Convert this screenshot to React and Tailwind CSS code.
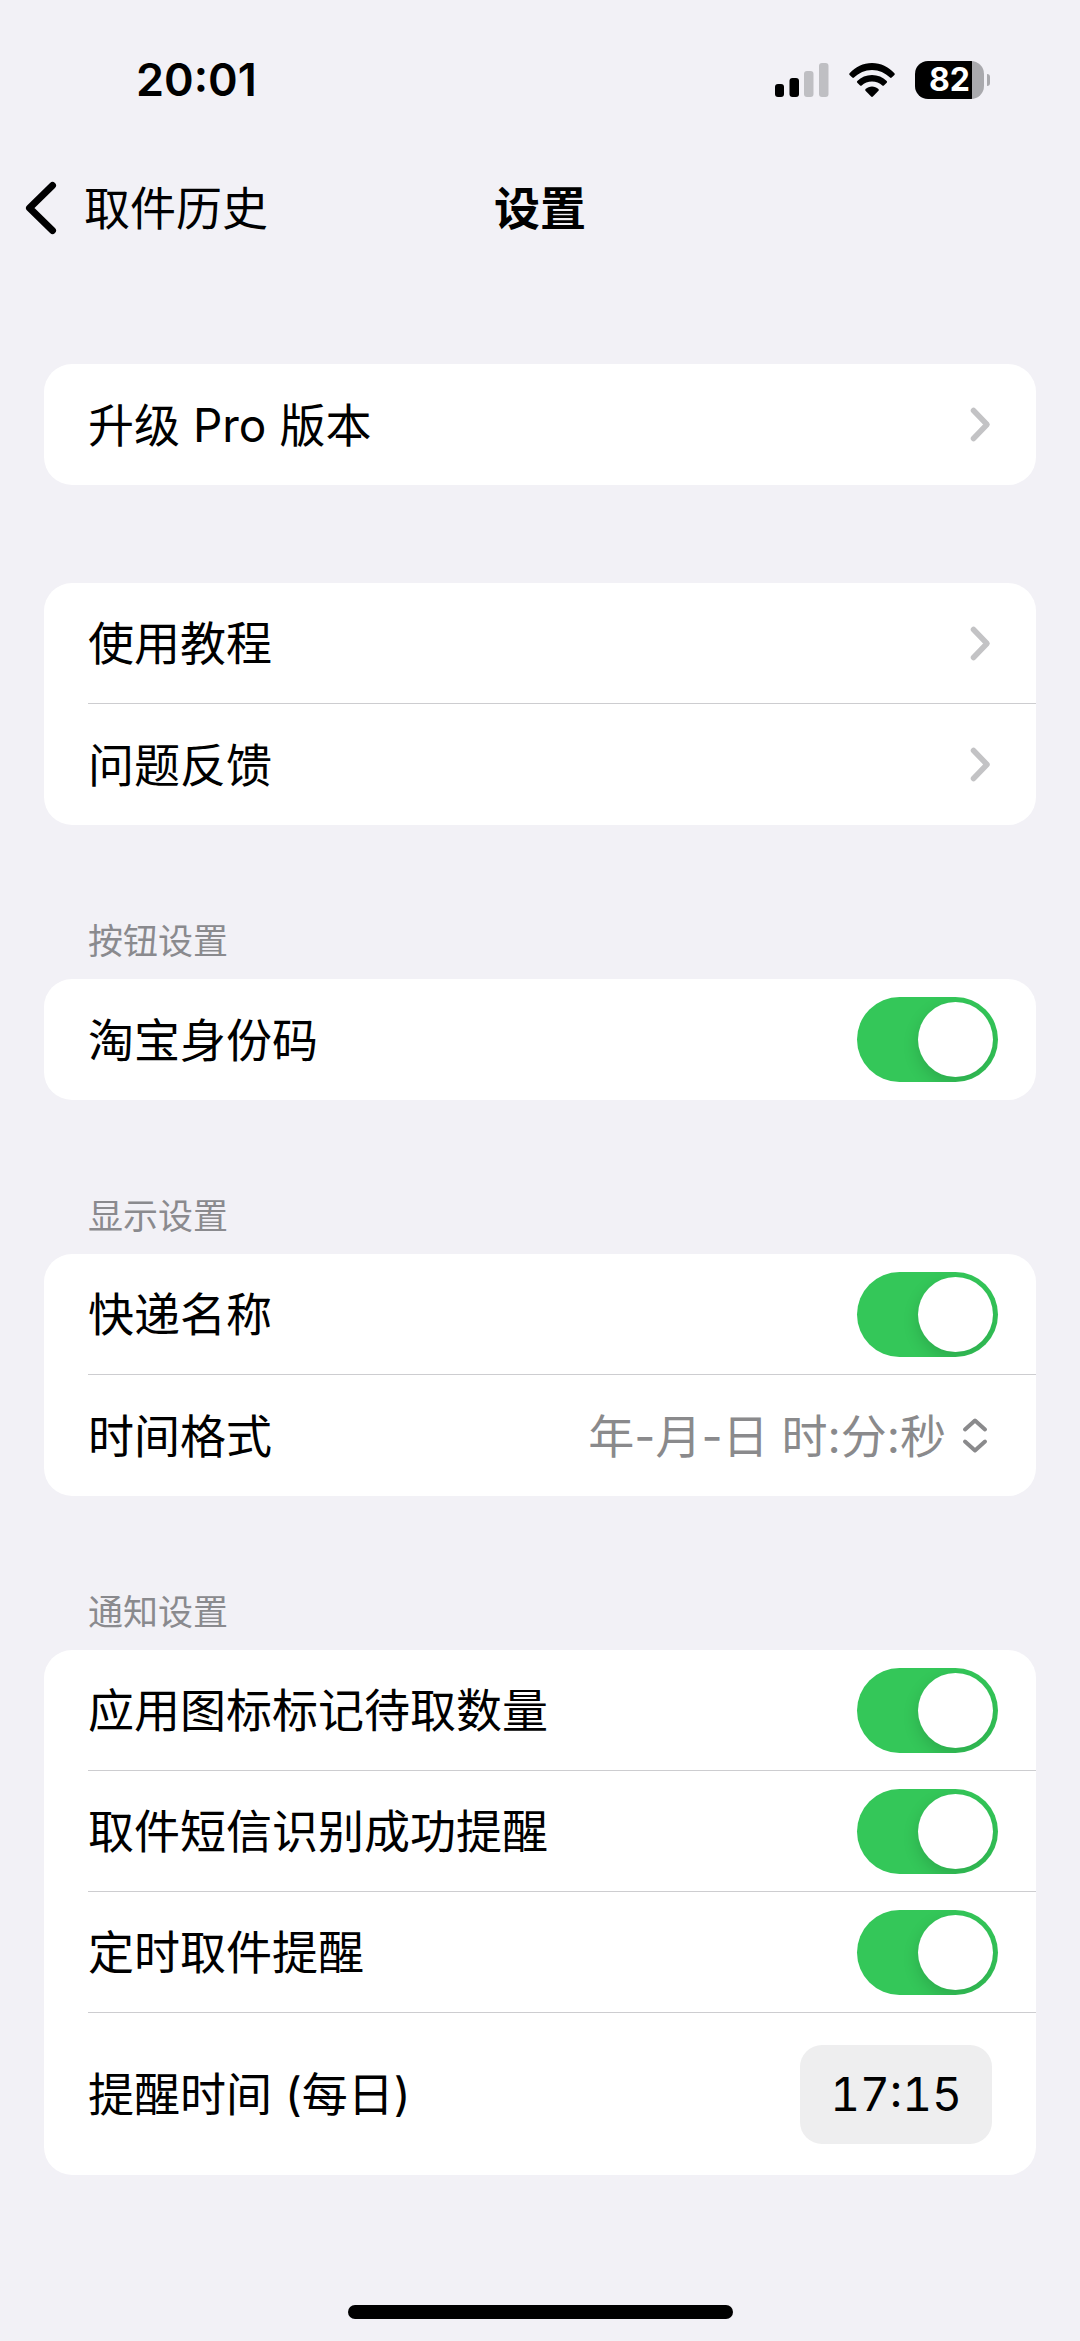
import React, { useState } from 'react'

const TIME_FORMATS = ['年-月-日 时:分:秒', '年-月-日 时:分', '月-日 时:分']

function StatusBar() {
  return (
    <div className="flex h-40 items-center justify-between pl-[136px] pr-[90px]">
      <time className="text-[45px] leading-[56px] font-semibold">20:01</time>
      <div className="flex items-center">
        <svg
          width="54"
          height="34"
          viewBox="0 0 54 34"
          className="mr-5"
          aria-hidden="true"
        >
          <rect x="0" y="21" width="9" height="13" rx="3" fill="#000" />
          <rect x="14.5" y="15" width="9.5" height="19" rx="3" fill="#000" />
          <rect x="29" y="8" width="9.5" height="26" rx="3" fill="#bfbfc3" />
          <rect x="44" y="0" width="9.5" height="34" rx="3" fill="#bfbfc3" />
        </svg>
        <svg
          width="46"
          height="34"
          viewBox="0 0 46 34"
          className="mr-5"
          aria-hidden="true"
        >
          <path d="M0.6 10.2C6.4 4 14.2 0 23 0s16.6 4 22.4 10.2c.5.5.5 1.2 0 1.7l-2.7 2.7c-.5.5-1.2.5-1.7 0C36.2 9.8 30 6.9 23 6.9S9.8 9.8 5 14.6c-.5.5-1.2.5-1.7 0L.6 11.9c-.5-.5-.5-1.2 0-1.7z" />
          <path d="M8.3 18C12.1 14.1 17.3 12 23 12s10.900 2.100 14.700 6c.5.5.5 1.2 0 1.7l-2.8 2.8c-.4.4-1.1.4-1.6 0C30.6 19.9 27 18.5 23 18.5s-7.6 1.4-10.3 4c-.5.4-1.2.4-1.6 0l-2.8-2.8c-.5-.5-.5-1.2 0-1.7z" />
          <path d="M16.6 26C18.3 24.5 20.6 23.5 23 23.5s4.7 1 6.4 2.5c.5.5.5 1.2.1 1.7l-5.600 5.800c-.5.5-1.3.5-1.8 0l-5.600-5.800c-.4-.5-.4-1.2.1-1.7z" />
        </svg>
        <div className="flex items-center gap-[3px]">
          <div className="flex h-[38px] w-[69px] items-center justify-center rounded-[13px] bg-linear-to-r from-black from-[57px] to-[#a9a9ad] to-[57px] text-[32px] leading-[38px] font-bold text-white">
            82
          </div>
          <div className="h-[12px] w-[3px] rounded-r-full bg-[#a9a9ad]" />
        </div>
      </div>
    </div>
  )
}

function NavBar() {
  return (
    <header className="grid h-24 grid-cols-[1fr_auto_1fr] items-center">
      <a href="#history" className="flex items-center gap-[26px] pl-6">
        <svg
          width="34"
          height="56"
          viewBox="0 0 34 56"
          fill="none"
          stroke="#000"
          strokeWidth="7"
          strokeLinecap="round"
          strokeLinejoin="round"
          aria-hidden="true"
        >
          <path d="M28.5 5.5L5.5 28l23 22.5" />
        </svg>
        <span className="text-[46px] leading-[56px]">取件历史</span>
      </a>
      <h1 className="text-[46px] leading-[56px] font-semibold">设置</h1>
    </header>
  )
}

function Section({ title, children }) {
  return (
    <section>
      {title && (
        <h2 className="mb-[13px] pl-11 text-[35px] leading-[50px] text-[#8a8a8e]">
          {title}
        </h2>
      )}
      <div className="overflow-hidden rounded-[28px] bg-white pl-11">
        <div className="divide-y divide-[#cdcdd0]">{children}</div>
      </div>
    </section>
  )
}

function LinkRow({ label, href }) {
  return (
    <a href={href} className="flex h-[121px] items-center justify-between pr-11">
      <span>{label}</span>
      <svg
        width="24"
        height="37"
        viewBox="0 0 24 37"
        fill="none"
        stroke="#c3c3c5"
        strokeWidth="5.5"
        strokeLinecap="round"
        strokeLinejoin="round"
        aria-hidden="true"
      >
        <path d="M5.5 4.5L19 18.5L5.5 32.5" />
      </svg>
    </a>
  )
}

function SwitchRow({ label }) {
  const [checked, setChecked] = useState(true)

  return (
    <label className="flex h-[121px] items-center justify-between pr-[38px]">
      <span>{label}</span>
      <input
        type="checkbox"
        role="switch"
        checked={checked}
        onChange={e => setChecked(e.target.checked)}
        className="flex h-[85px] w-[141px] appearance-none items-center overflow-hidden rounded-full bg-[#e9e9eb] px-[5px] before:size-[75px] before:rounded-full before:bg-white before:shadow-[0_6px_16px_rgba(0,0,0,0.15)] checked:justify-end checked:bg-[#34c759]"
      />
    </label>
  )
}

function FormatRow() {
  const [format, setFormat] = useState(TIME_FORMATS[0])

  return (
    <div className="flex h-[121px] items-center pr-11">
      <label htmlFor="time-format">时间格式</label>
      <select
        id="time-format"
        value={format}
        onChange={e => setFormat(e.target.value)}
        className="ml-auto appearance-none bg-transparent text-right text-[#8a8a8c] [field-sizing:content]"
      >
        {TIME_FORMATS.map(item => (
          <option key={item}>{item}</option>
        ))}
      </select>
      <svg
        width="30"
        height="40"
        viewBox="0 0 30 40"
        className="ml-4"
        fill="none"
        stroke="#8a8a8c"
        strokeWidth="4"
        strokeLinecap="round"
        strokeLinejoin="round"
        aria-hidden="true"
      >
        <path d="M3 13.5L13 4.500l10 9M3 25.500l10 9l10-9" />
      </svg>
    </div>
  )
}

function RemindTimeRow() {
  const [time, setTime] = useState('17:15')

  return (
    <div className="flex h-[162px] items-center justify-between pr-11">
      <label htmlFor="remind-time">提醒时间 (每日)</label>
      <input
        id="remind-time"
        type="text"
        value={time}
        onChange={e => setTime(e.target.value)}
        className="h-[99px] w-48 rounded-[22px] bg-[#eeeeef] text-center tabular-nums"
      />
    </div>
  )
}

export default function App() {
  return (
    <div
      lang="zh-CN"
      className="flex min-h-screen flex-col bg-[#f2f1f6] font-['Inter','Noto_Sans_CJK_SC',sans-serif] text-black"
    >
      <StatusBar />
      <NavBar />
      <main className="flex flex-1 flex-col px-11 pt-[108px] text-[46px] leading-[60px]">
        <div className="mb-[98px]">
          <Section>
            <LinkRow label="升级 Pro 版本" href="#pro" />
          </Section>
        </div>
        <div className="flex flex-col gap-[91px]">
          <Section>
            <LinkRow label="使用教程" href="#guide" />
            <LinkRow label="问题反馈" href="#feedback" />
          </Section>
          <Section title="按钮设置">
            <SwitchRow label="淘宝身份码" />
          </Section>
          <Section title="显示设置">
            <SwitchRow label="快递名称" />
            <FormatRow />
          </Section>
          <Section title="通知设置">
            <SwitchRow label="应用图标标记待取数量" />
            <SwitchRow label="取件短信识别成功提醒" />
            <SwitchRow label="定时取件提醒" />
            <RemindTimeRow />
          </Section>
        </div>
      </main>
      <div className="mx-auto mb-[22px] h-[14px] w-[385px] rounded-full bg-black" />
    </div>
  )
}
